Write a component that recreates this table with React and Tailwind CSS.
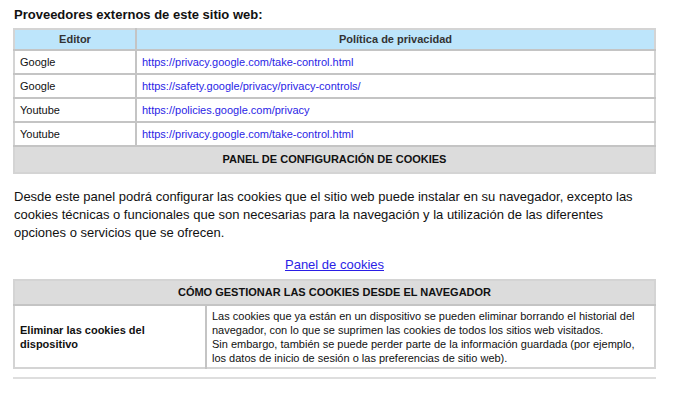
const providers = [
  { editor: 'Google', url: 'https://privacy.google.com/take-control.html' },
  { editor: 'Google', url: 'https://safety.google/privacy/privacy-controls/' },
  { editor: 'Youtube', url: 'https://policies.google.com/privacy' },
  { editor: 'Youtube', url: 'https://privacy.google.com/take-control.html' },
];

export default function App() {
  return (
    <div className="w-[673px] h-[393px] overflow-hidden bg-white font-['Liberation_Sans',Arial,sans-serif] text-[#111]">
      <div className="pl-[13px] pr-[17px] pt-[7px]">
        <h2 className="text-[13px] font-bold leading-[16px] pl-px">Proveedores externos de este sitio web:</h2>

        {/* Providers table */}
        <table className="mt-[5px] w-full border-collapse border-2 border-[#d4d4d4] text-[11px]">
          <thead>
            <tr className="h-[21px] bg-[#bde5fb] border-b-2 border-[#c4c4c4]">
              <th className="w-[122px] border-r-2 border-[#c4c4c4] font-bold text-[#333] text-center">Editor</th>
              <th className="font-bold text-[#333] text-center">Política de privacidad</th>
            </tr>
          </thead>
          <tbody>
            {providers.map((p, i) => (
              <tr key={i} className="h-[24px] border-b-2 border-[#c4c4c4]">
                <td className="pl-[5px] border-r-2 border-[#c4c4c4]">{p.editor}</td>
                <td className="pl-[5px] text-[#2a1ee6]">{p.url}</td>
              </tr>
            ))}
            <tr className="h-[27px] bg-[#dcdcdc]">
              <td colSpan={2} className="text-center font-bold">PANEL DE CONFIGURACIÓN DE COOKIES</td>
            </tr>
          </tbody>
        </table>

        <p className="mt-[14px] pl-px text-[13px] leading-[18px]">
          Desde este panel podrá configurar las cookies que el sitio web puede instalar en su navegador, excepto las cookies técnicas o funcionales que son necesarias para la navegación y la utilización de las diferentes opciones o servicios que se ofrecen.
        </p>

        <div className="mt-[15px] text-center text-[13px] leading-[16px]">
          <a href="#" className="text-[#2a1ee6] underline">Panel de cookies</a>
        </div>

        {/* Browser table */}
        <table className="mt-[6px] w-full border-collapse border-2 border-[#d4d4d4] text-[11px]">
          <thead>
            <tr className="h-[25px] bg-[#dcdcdc] border-b-2 border-[#c4c4c4]">
              <th colSpan={2} className="text-center font-bold">CÓMO GESTIONAR LAS COOKIES DESDE EL NAVEGADOR</th>
            </tr>
          </thead>
          <tbody>
            <tr className="h-[63px]">
              <td className="w-[192px] pl-[5px] border-r-2 border-[#c4c4c4] font-bold leading-[14px] align-middle">
                Eliminar las cookies del<br />dispositivo
              </td>
              <td className="pl-[5px] pr-2 py-[2px] leading-[14px]">
                Las cookies que ya están en un dispositivo se pueden eliminar borrando el historial del navegador, con lo que se suprimen las cookies de todos los sitios web visitados.<br />
                Sin embargo, también se puede perder parte de la información guardada (por ejemplo, los datos de inicio de sesión o las preferencias de sitio web).
              </td>
            </tr>
          </tbody>
        </table>

        <div className="mt-[8px] h-[2px] bg-[#dedede]" />
      </div>
    </div>
  );
}
